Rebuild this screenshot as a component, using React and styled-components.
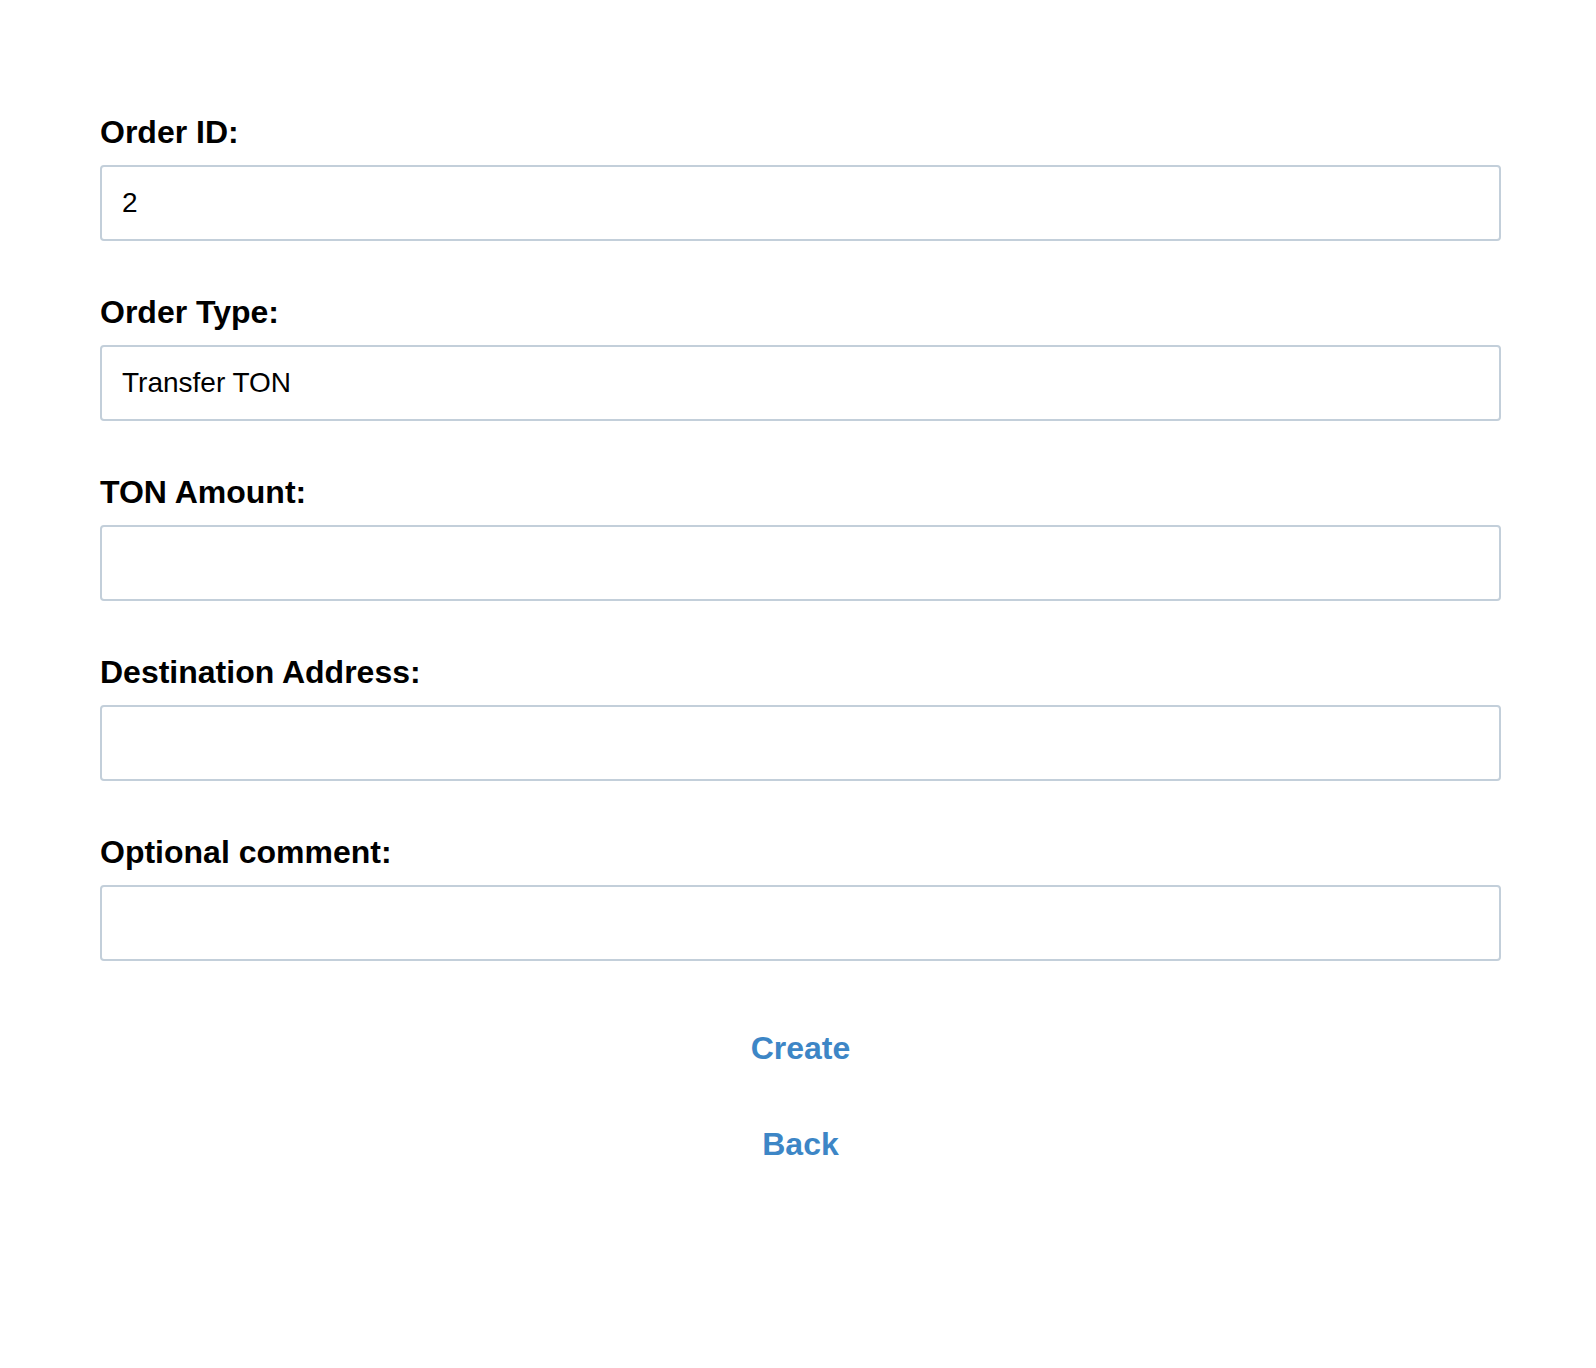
import styled, { createGlobalStyle } from "styled-components";

const GlobalStyle = createGlobalStyle`
  html, body {
    margin: 0;
    padding: 0;
    background: #ffffff;
    font-family: "Liberation Sans", Arial, Helvetica, sans-serif;
  }
`;

const Page = styled.div`
  padding: 114px 95px 160px 100px;
  display: flex;
  flex-direction: column;
`;

const Form = styled.form`
  display: flex;
  flex-direction: column;
  gap: 53px;
`;

const Field = styled.div`
  display: flex;
  flex-direction: column;
  gap: 14px;
`;

const Label = styled.label`
  font-size: 32px;
  font-weight: 700;
  color: #000000;
  line-height: 37px;
`;

const Input = styled.input`
  box-sizing: border-box;
  width: 100%;
  height: 76px;
  padding: 0 20px;
  border: 2px solid #c3cfda;
  border-radius: 4px;
  font-family: "Liberation Sans", Arial, Helvetica, sans-serif;
  font-size: 28px;
  color: #000000;
  background: #ffffff;
  outline: none;
`;

const Actions = styled.div`
  display: flex;
  flex-direction: column;
  align-items: center;
  gap: 59px;
  margin-top: 69px;
`;

const LinkButton = styled.button`
  border: none;
  background: transparent;
  padding: 0;
  font-family: "Liberation Sans", Arial, Helvetica, sans-serif;
  font-size: 32px;
  font-weight: 700;
  line-height: 37px;
  color: #3d86c6;
  cursor: pointer;
`;

const fields = [
  { label: "Order ID:", value: "2" },
  { label: "Order Type:", value: "Transfer TON" },
  { label: "TON Amount:", value: "" },
  { label: "Destination Address:", value: "" },
  { label: "Optional comment:", value: "" },
];

export default function App() {
  return (
    <>
      <GlobalStyle />
      <Page>
        <Form onSubmit={(e) => e.preventDefault()}>
          {fields.map((f) => (
            <Field key={f.label}>
              <Label>{f.label}</Label>
              <Input defaultValue={f.value} />
            </Field>
          ))}
        </Form>
        <Actions>
          <LinkButton>Create</LinkButton>
          <LinkButton>Back</LinkButton>
        </Actions>
      </Page>
    </>
  );
}
